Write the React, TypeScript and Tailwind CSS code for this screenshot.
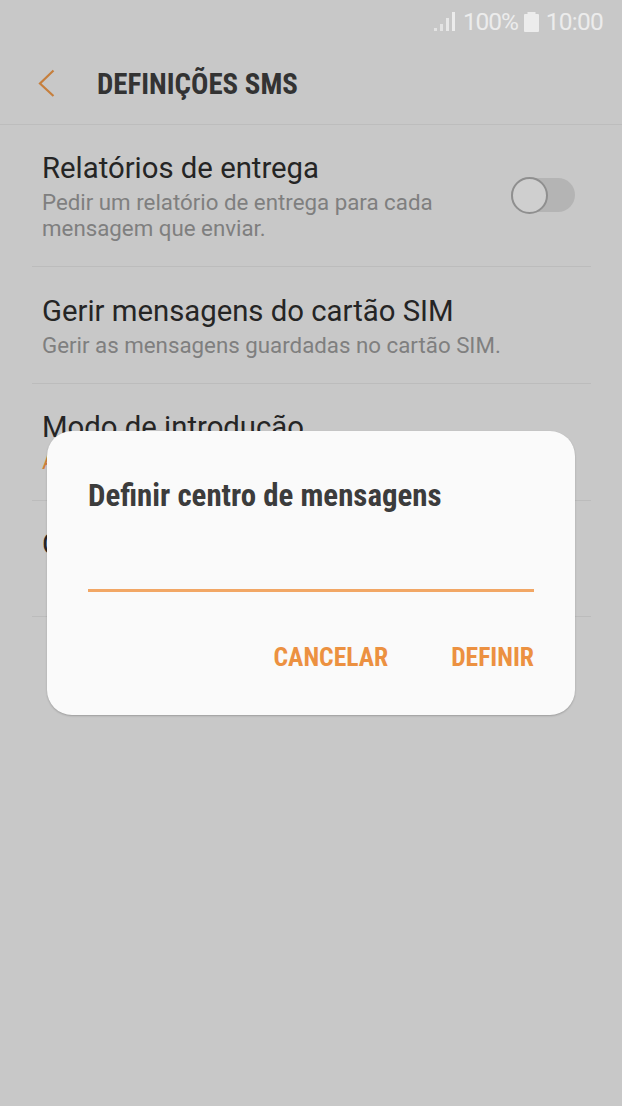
function SignalIcon() {
  return (
    <svg width="21" height="20" viewBox="0 0 21 20" className="text-[#ececec]">
      <rect x="0" y="16" width="3" height="3" fill="currentColor" opacity="0.75" />
      <rect x="6" y="12" width="3" height="7" fill="currentColor" opacity="0.75" />
      <rect x="12" y="6" width="3" height="13" fill="currentColor" opacity="0.85" />
      <rect x="18" y="0" width="3" height="19" fill="currentColor" />
    </svg>
  );
}

function BatteryIcon() {
  return (
    <svg width="15" height="20" viewBox="0 0 15 20" className="text-[#ececec]">
      <path d="M3.5 0h8v2H14a1 1 0 0 1 1 1v16a1 1 0 0 1-1 1H1a1 1 0 0 1-1-1V3a1 1 0 0 1 1-1h2.5z" fill="currentColor" />
    </svg>
  );
}

function BackIcon() {
  return (
    <svg width="18" height="30" viewBox="0 0 18 30" fill="none">
      <path d="M15.5 2.5 2 15.5 15.5 28" stroke="#c67f3d" strokeWidth="2.2" />
    </svg>
  );
}

export default function App() {
  return (
    <div className="relative w-[622px] h-[1106px] bg-[#c8c8c8] overflow-hidden font-['Roboto',sans-serif]">
      <div className="h-[44px] flex justify-end items-center pr-[19px]">
        <SignalIcon />
        <span className="ml-[8px] text-[24.5px] tracking-[-1.1px] text-[#ececec]">100%</span>
        <span className="ml-[6px] flex"><BatteryIcon /></span>
        <span className="ml-[7px] text-[24.5px] tracking-[-0.75px] text-[#ececec]">10:00</span>
      </div>

      <div className="h-[81px] border-b border-[#bdbdbd] flex items-center pl-[38px] pb-[3px]">
        <BackIcon />
        <h1 className="ml-[41px] pt-[5px] text-[28.9px] font-bold text-[#333333] [font-stretch:75%]">DEFINIÇÕES SMS</h1>
      </div>

      <div className="ml-8 mr-[31px] h-[142px] border-b border-[#bcbcbc] pl-2.5 pr-[16px] pt-[26px] flex justify-between">
        <div>
          <p className="text-[29.3px] leading-[34px] text-[#252525]">Relatórios de entrega</p>
          <p className="mt-[4px] w-[440px] text-[22.3px] leading-[26px] text-[#7f7f7f]">
            Pedir um relatório de entrega para cada mensagem que enviar.
          </p>
        </div>
        <div className="relative mt-[27px] w-[64px] h-[34px] rounded-full bg-[#b4b4b4]">
          <div className="absolute -left-[0.5px] -top-px w-[37px] h-[37px] rounded-full bg-[#cfcfcf] border-2 border-[#8f8f8f]" />
        </div>
      </div>

      <div className="ml-8 mr-[31px] h-[117px] border-b border-[#bcbcbc] pl-2.5 pt-[27px]">
        <p className="text-[29.3px] leading-[34px] text-[#252525]">Gerir mensagens do cartão SIM</p>
        <p className="mt-[4px] text-[22.3px] leading-[26px] text-[#7f7f7f]">Gerir as mensagens guardadas no cartão SIM.</p>
      </div>

      <div className="ml-8 mr-[31px] h-[117px] border-b border-[#bcbcbc] pl-2.5 pt-[26px]">
        <p className="text-[29.3px] leading-[34px] text-[#252525]">Modo de introdução</p>
        <p className="mt-[4px] text-[22.3px] leading-[26px] text-[#d0803a]">Automático</p>
      </div>

      <div className="ml-8 mr-[31px] h-[116px] border-b border-[#bcbcbc] pl-2.5 pt-[26px]">
        <p className="text-[29.3px] leading-[34px] text-[#252525]">Centro de mensagens</p>
      </div>

      <div className="absolute left-[47px] top-[431px] w-[528px] h-[284px] rounded-[25px] bg-[#fafafa] shadow-[0_1px_2px_rgba(0,0,0,0.22)] px-[41px] pt-[46px]">
        <h2 className="text-[30.9px] leading-[38px] font-bold text-[#3c3c3c] [font-stretch:75%]">Definir centro de mensagens</h2>
        <div className="mt-[74px] h-[3px] bg-[#f2a765]" />
        <div className="mt-[48px] flex justify-end gap-[63px] text-[25.6px] leading-[34px] font-bold text-[#ec9141] [font-stretch:75%]">
          <span>CANCELAR</span>
          <span>DEFINIR</span>
        </div>
      </div>
    </div>
  );
}
